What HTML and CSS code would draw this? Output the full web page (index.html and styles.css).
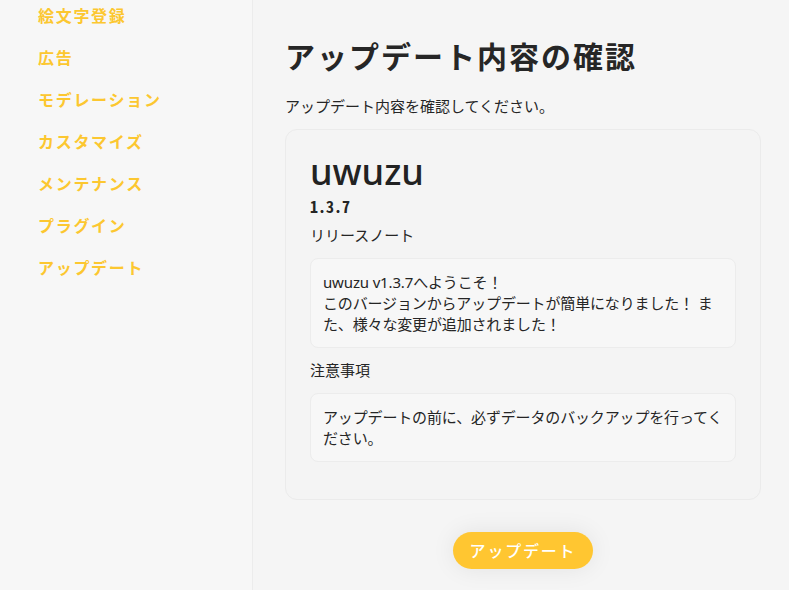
FILE: index.html
```html
<!DOCTYPE html>
<html lang="ja">
<head>
<meta charset="utf-8">
<title>アップデート内容の確認</title>
<link rel="stylesheet" href="styles.css">
</head>
<body>
<div class="layout">
  <aside class="sidebar">
    <nav class="menu">
      <a class="menu-item" href="#">絵文字登録</a>
      <a class="menu-item" href="#">広告</a>
      <a class="menu-item" href="#">モデレーション</a>
      <a class="menu-item" href="#">カスタマイズ</a>
      <a class="menu-item" href="#">メンテナンス</a>
      <a class="menu-item" href="#">プラグイン</a>
      <a class="menu-item" href="#">アップデート</a>
    </nav>
  </aside>
  <main class="main">
    <h1 class="title">アップデート内容の確認</h1>
    <p class="lead">アップデート内容を確認してください。</p>
    <section class="card">
      <h2 class="app-name">uwuzu</h2>
      <div class="version">1.3.7</div>
      <div class="label">リリースノート</div>
      <div class="note">uwuzu v1.3.7へようこそ！<br>このバージョンからアップデートが簡単になりました！ また、様々な変更が追加されました！</div>
      <div class="label">注意事項</div>
      <div class="note">アップデートの前に、必ずデータのバックアップを行ってください。</div>
    </section>
    <div class="actions">
      <button class="btn" type="button">アップデート</button>
    </div>
  </main>
</div>
</body>
</html>
```

FILE: styles.css
```css
html, body {
  margin: 0;
  padding: 0;
  height: 100%;
}
body {
  background: #f5f5f5;
  color: #252525;
  font-family: "Noto Sans", "Noto Sans CJK JP", sans-serif;
  overflow: hidden;
}
.layout {
  display: flex;
  height: 590px;
}
.sidebar {
  width: 252px;
  flex: none;
  background: #f7f7f7;
  border-right: 1px solid #ececec;
}
.menu {
  display: flex;
  flex-direction: column;
  gap: 18px;
  padding: 3px 0 0 38px;
}
.menu-item {
  color: #fcc730;
  font-family: "Noto Sans CJK JP", sans-serif;
  font-weight: 700;
  font-size: 16px;
  line-height: 24px;
  letter-spacing: 1.7px;
  text-decoration: none;
}
.main {
  flex: 1;
  padding: 35px 28px 0 32px;
  display: flex;
  flex-direction: column;
}
.title {
  margin: 0;
  font-family: "Noto Sans CJK JP", sans-serif;
  font-size: 30px;
  line-height: 40px;
  font-weight: 700;
  letter-spacing: 2px;
  color: #262626;
}
.lead {
  margin: 21px 0 0;
  font-size: 15px;
  line-height: 21px;
}
.card {
  margin-top: 12px;
  border: 1px solid #ebebeb;
  border-radius: 12px;
  background: #f4f4f4;
  padding: 20px 24px 25px;
}
.app-name {
  margin: 0;
  font-family: "Noto Sans", sans-serif;
  font-weight: 500;
  font-size: 36px;
  line-height: 44px;
  color: #222;
}
.version {
  font-family: "Noto Sans CJK JP", sans-serif;
  font-feature-settings: "hwid";
  font-weight: 700;
  font-size: 16px;
  line-height: 20px;
  margin-top: 2px;
}
.label {
  font-size: 15px;
  line-height: 21px;
  margin-top: 9px;
}
.note {
  margin-top: 12px;
  margin-bottom: 12px;
  border: 1px solid #ececec;
  border-radius: 8px;
  background: #f7f7f7;
  padding: 13px 10px 12px 12px;
  font-size: 15px;
  line-height: 21px;
  letter-spacing: -0.15px;
}
.actions {
  display: flex;
  justify-content: center;
  margin-top: 32px;
}
.btn {
  border: none;
  border-radius: 999px;
  background: #ffc631;
  color: #fff;
  font-family: "Noto Sans CJK JP", sans-serif;
  font-size: 16px;
  line-height: 37px;
  height: 37px;
  padding: 0 17px;
  letter-spacing: 1.8px;
  font-weight: 500;
  box-shadow: 0 0 24px rgba(0, 0, 0, 0.08);
  cursor: pointer;
}
```
